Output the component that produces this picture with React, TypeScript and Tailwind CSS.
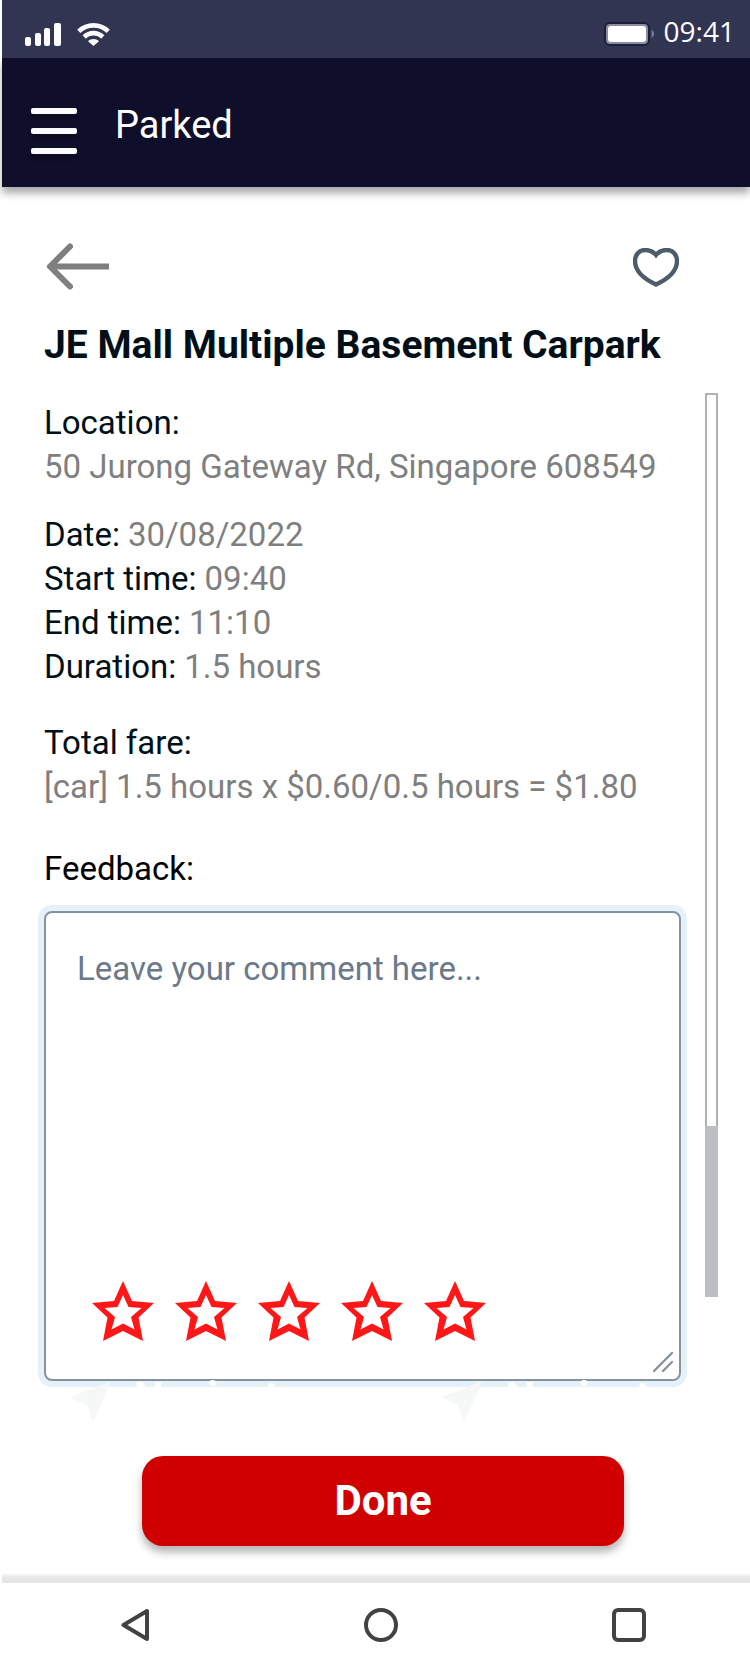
import { useState } from "react";

const visit = [
  { label: "Date:", value: "30/08/2022" },
  { label: "Start time:", value: "09:40" },
  { label: "End time:", value: "11:10" },
  { label: "Duration:", value: "1.5 hours" },
];

function StatusBar() {
  return (
    <div className="flex h-[58px] items-center justify-between bg-[#323552] pt-[10px] pr-[15px] pl-[23px] text-white">
      <div className="flex items-center gap-4">
        <svg width="36" height="23" viewBox="0 0 36 23" fill="#fdfcff" aria-label="Signal">
          <rect x="0" y="14" width="6" height="9" rx="2" />
          <rect x="10" y="10" width="6" height="13" rx="2" />
          <rect x="19" y="5" width="6" height="18" rx="2" />
          <rect x="29" y="0" width="7" height="23" rx="2" />
        </svg>
        <svg width="33" height="23" viewBox="0 0 33 23" fill="none" stroke="#fdfcff" strokeWidth="4.6" aria-label="Wi-Fi">
          <path d="M1.8 8.4C10 0.4 23 0.4 31.2 8.4" />
          <path d="M7.2 14C12.5 8.8 20.5 8.8 25.8 14" />
          <path d="M11 18.2C14 15.4 19 15.4 22 18.2L16.500 23Z" fill="#fdfcff" stroke="none" />
        </svg>
      </div>
      <div className="flex items-center gap-[9px]">
        <svg width="51" height="24" viewBox="0 0 51 24" aria-label="Battery">
          <rect x="1" y="1" width="44" height="22" rx="5" fill="#8b8ca0" stroke="#1e1f3a" strokeWidth="2" />
          <rect x="4" y="4" width="38" height="16" rx="3" fill="#fff" />
          <path d="M47.500 8C51 10 51 14 47.500 16Z" fill="#77788f" />
        </svg>
        <span className="pb-[6px] font-['Open_Sans',sans-serif] text-[28px] leading-[40px]">09:41</span>
      </div>
    </div>
  );
}

function Star({ filled }: { filled: boolean }) {
  return (
    <svg width="62" height="60" viewBox="0 0 62 60" fill="#ff1616" fillRule="evenodd">
      <path
        d={
          "M31 0L40 20L62 22L46.500 36.500L51 60L31 50L11 60L15.500 36.500L0 22L22 20Z" +
          (filled ? "" : "M31 14L25.500 26L12.500 27L23 36L19.500 48.500L31 42.500L42.500 48.500L39 36L49.500 27L36.500 26Z")
        }
      />
    </svg>
  );
}

function NavigateLink() {
  return (
    <a href="#navigate" className="flex items-start gap-[23px]">
      <svg width="39" height="39" viewBox="0 0 39 39" fill="#f6f8f8">
        <path d="M36 1.500Q39 0 38 3L23 37Q21 40 19.500 37L15 24L1 18Q-1 16.500 1 15Z" />
      </svg>
      <span className="text-[42px] leading-[34px] font-bold text-white">Navigate</span>
    </a>
  );
}

export default function App() {
  const [rating, setRating] = useState(0);

  return (
    <div className="flex min-h-screen flex-col bg-white pl-0.5 font-[Roboto,sans-serif] text-[33px] leading-[44px] text-[#000f18]">
      <StatusBar />
      <header className="flex h-[129px] items-center gap-[38px] bg-[#0f0e2b] pt-[5px] pl-[29px] shadow-[0_6px_8px_rgba(0,0,0,0.35)]">
        <button type="button" aria-label="Menu" className="flex flex-col gap-[14px] pt-3">
          <span className="h-[6px] w-[46px] rounded-[2px] bg-[#fbfaff] shadow-[0_4px_4px_rgba(0,0,0,0.3)]" />
          <span className="h-[6px] w-[46px] rounded-[2px] bg-[#fbfaff] shadow-[0_4px_4px_rgba(0,0,0,0.3)]" />
          <span className="h-[6px] w-[46px] rounded-[2px] bg-[#fbfaff] shadow-[0_4px_4px_rgba(0,0,0,0.3)]" />
        </button>
        <h1 className="text-[38px] text-white">Parked</h1>
      </header>

      <main className="flex flex-1 flex-col pr-8 pl-[42px]">
        <div className="flex items-center justify-between pt-[56px] pr-[39px] pl-[3px]">
          <button type="button" aria-label="Back">
            <svg width="62" height="48" viewBox="0 0 62 48" fill="none" stroke="#7f7f7f" strokeWidth="6">
              <path d="M4 23.500H62" />
              <path d="M23 3.500L3 23.500L23 43.500" strokeLinecap="round" strokeLinejoin="round" />
            </svg>
          </button>
          <button type="button" aria-label="Add to favourites">
            <svg width="46" height="39" viewBox="0 0 46 39" fill="none" stroke="#4d5c6c" strokeWidth="4.4">
              <path d="M23 7C19 2 14 2 12 2C6 2 2 7 2 13C2 23 11 31 23 36.500C35 31 44 23 44 13C44 7 40 2 34 2C32 2 27 2 23 7Z" />
            </svg>
          </button>
        </div>
        <h2 className="mt-[30px] text-[39px] leading-[48px] font-bold">JE Mall Multiple Basement Carpark</h2>

        <div className="mt-6 flex gap-6">
          <div className="flex min-w-0 flex-1 flex-col pt-2">
            <section>
              <h3>Location:</h3>
              <p className="text-[#7f7f7f]">50 Jurong Gateway Rd, Singapore 608549</p>
            </section>
            <dl className="mt-6">
              {visit.map((row) => (
                <div key={row.label} className="flex gap-2">
                  <dt>{row.label}</dt>
                  <dd className="text-[#7f7f7f]">{row.value}</dd>
                </div>
              ))}
            </dl>
            <section className="mt-8">
              <h3>Total fare:</h3>
              <p className="text-[#7f7f7f]">[car] 1.5 hours x $0.60/0.5 hours = $1.80</p>
            </section>
            <label htmlFor="comment" className="mt-[38px] text-black">
              Feedback:
            </label>
            <div className="relative mt-5 flex">
              <textarea
                id="comment"
                placeholder="Leave your comment here..."
                className="h-[470px] w-full resize-none rounded-[8px] border-2 border-[#87929f] bg-white px-[31px] py-[34px] shadow-[0_0_0_6px_#e4f1f9] outline-none placeholder:text-[#6b798a] placeholder:opacity-100"
              />
              <div className="absolute bottom-10 left-12 flex gap-[21px]">
                {[1, 2, 3, 4, 5].map((n) => (
                  <button key={n} type="button" aria-label={`Rate ${n}`} onClick={() => setRating(n)}>
                    <Star filled={n <= rating} />
                  </button>
                ))}
              </div>
              <svg
                className="pointer-events-none absolute right-2 bottom-[9px]"
                width="20"
                height="20"
                viewBox="0 0 20 20"
                stroke="#87929f"
                strokeWidth="2.4"
                strokeLinecap="round"
              >
                <path d="M1 19L19 1M10 19L19 10" />
              </svg>
            </div>
          </div>
          <div className="mb-[84px] flex w-[13px] flex-col border-2 border-b-0 border-[#b1b1b1]" aria-hidden="true">
            <div className="grow-[81]" />
            <div className="-mx-0.5 grow-[19] bg-[#bbbfc3]" />
          </div>
        </div>

        <div className="relative flex h-12 justify-between pr-[45px] pl-7">
          <NavigateLink />
          <NavigateLink />
        </div>

        <div className="mt-[27px] flex justify-center pr-[2px] pl-[6px]">
          <button
            type="button"
            className="h-[90px] w-[482px] rounded-[21px] bg-[#d00000] text-[42px] font-bold text-white shadow-[0_6px_8px_rgba(0,0,0,0.3)]"
          >
            Done
          </button>
        </div>
      </main>

      <div className="h-[10px] bg-linear-to-b from-white via-[#e7e7e7] via-40% to-[#e5e5e5]" />
      <nav className="flex h-[84px] items-center justify-between pr-[104px] pl-[119px]">
        <button type="button" aria-label="Back">
          <svg width="28" height="34" viewBox="0 0 28 34" fill="none" stroke="#424242" strokeWidth="4" strokeLinejoin="round">
            <path d="M26 3V31L2.500 17Z" />
          </svg>
        </button>
        <button type="button" aria-label="Home">
          <svg width="34" height="34" viewBox="0 0 34 34" fill="none" stroke="#424242" strokeWidth="4">
            <circle cx="17" cy="17" r="15" />
          </svg>
        </button>
        <button type="button" aria-label="Recent apps">
          <svg width="34" height="34" viewBox="0 0 34 34" fill="none" stroke="#424242" strokeWidth="4">
            <rect x="2" y="2" width="30" height="30" rx="4" />
          </svg>
        </button>
      </nav>
    </div>
  );
}
